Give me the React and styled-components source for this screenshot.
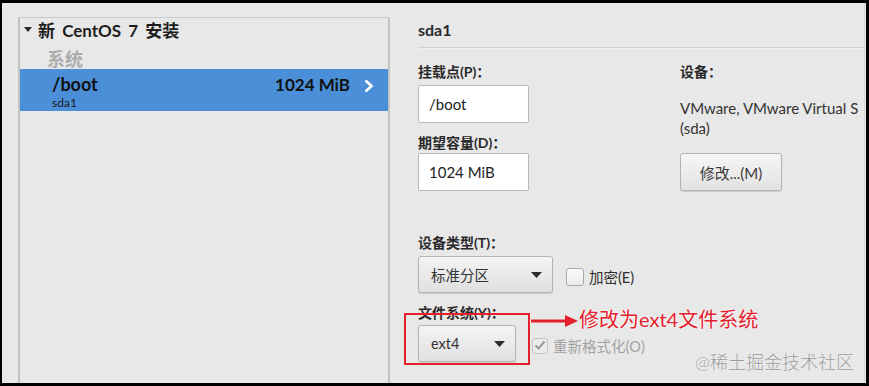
import React from "react";
import styled, { createGlobalStyle } from "styled-components";

const Global = createGlobalStyle`
  html, body { margin: 0; padding: 0; background: #000; }
  body { font-family: "Lato", "Noto Sans CJK SC", sans-serif; color: #2e3436; }
  * { box-sizing: border-box; }
`;

const Frame = styled.div`
  width: 869px;
  height: 386px;
  background: #000;
  padding: 3px 3px 3px 2px;
`;

const Screen = styled.div`
  width: 100%;
  height: 100%;
  background: #e8e8e8;
  display: flex;
  overflow: hidden;
`;

const Sidebar = styled.div`
  width: 388px;
  padding: 14px 0 0 16px;
  display: flex;
`;

const PartList = styled.div`
  flex: 1;
  border: 1px solid #c9c9c9;
  border-left: 2px solid #c2c2c2;
  border-right: 2px solid #c4c4c4;
  border-bottom: none;
  display: flex;
  flex-direction: column;
`;

const GroupHeader = styled.div`
  height: 22px;
  display: flex;
  align-items: center;
  padding-left: 4px;
  font-size: 17px;
  font-weight: 700;
  word-spacing: 3px;
  color: #1e1e1e;
  gap: 6px;
`;

const SectionLabel = styled.div`
  padding: 10px 0 0 27px;
  height: 29px;
  line-height: 19px;
  font-size: 18px;
  font-weight: 700;
  color: #acacac;
`;

const PartRow = styled.div`
  height: 42px;
  display: flex;
  align-items: flex-start;
  padding: 5px 14px 0 32px;
  background: ${(p) => (p.$selected ? "#4a8fd8" : "transparent")};
`;

const PartInfo = styled.div`
  flex: 1;
  display: flex;
  flex-direction: column;
`;

const PartName = styled.div`
  font-size: 18px;
  font-weight: 700;
  line-height: 20px;
  color: #111;
`;

const PartDev = styled.div`
  font-size: 12px;
  line-height: 14px;
  margin-top: 2px;
  color: #1a1a1a;
`;

const PartSize = styled.div`
  font-size: 17px;
  font-weight: 700;
  line-height: 20px;
  margin-top: 1px;
  color: #111;
`;

const ChevronWrap = styled.span`
  margin: 5px 0 0 13px;
  display: flex;
`;

const Detail = styled.div`
  position: relative;
  flex: 1;
  padding: 0 0 0 28px;
  border-right: 1px solid #d6d6d6;
  margin-right: 1px;
`;

const DetailTitle = styled.div`
  padding-top: 16px;
  line-height: 22px;
  font-size: 16px;
  font-weight: 700;
  color: #2a2a2a;
`;

const Divider = styled.div`
  margin-top: 6px;
  height: 1px;
  background: #d2d2d2;
  box-shadow: 0 1px 0 #f0f0f0;
`;

const FormGrid = styled.div`
  display: grid;
  grid-template-columns: 262px 1fr;
  padding-top: 16px;
`;

const Column = styled.div`
  display: flex;
  flex-direction: column;
  align-items: flex-start;
`;

const FieldLabel = styled.div`
  font-size: 14px;
  font-weight: 700;
  line-height: 16px;
  color: #2a2a2a;
  margin-top: ${(p) => p.$gap || 0}px;
`;

const TextField = styled.div`
  margin-top: ${(p) => p.$gap || 0}px;
  width: 111px;
  height: 38px;
  background: #fff;
  border: 1px solid #b9b9b9;
  border-radius: 2px;
  display: flex;
  align-items: center;
  padding-left: 10px;
  font-size: 15px;
  color: #222;
`;

const DeviceText = styled.div`
  margin-top: 18px;
  font-size: 15px;
  line-height: 20px;
  color: #333;
  white-space: nowrap;
`;

const PushButton = styled.div`
  margin-top: 15px;
  width: 102px;
  height: 38px;
  border: 1px solid #b3b3b3;
  border-radius: 3px;
  background: linear-gradient(#f6f6f6, #e2e2e2);
  box-shadow: 0 1px 1px rgba(0, 0, 0, 0.12);
  display: flex;
  align-items: center;
  justify-content: center;
  font-size: 15px;
  color: #3a3a3a;
`;

const ComboRow = styled.div`
  margin-top: ${(p) => p.$gap || 0}px;
  display: flex;
  align-items: center;
  gap: ${(p) => p.$spacing}px;
`;

const Combo = styled.div`
  width: ${(p) => p.$w}px;
  height: 37px;
  border: 1px solid #b3b3b3;
  border-radius: 3px;
  background: linear-gradient(#f4f4f4, #e0e0e0);
  box-shadow: 0 1px 1px rgba(0, 0, 0, 0.12);
  display: flex;
  align-items: center;
  justify-content: space-between;
  padding: 0 10px 0 12px;
  font-size: 14.5px;
  color: #333;
`;

const CheckLabel = styled.label`
  display: flex;
  align-items: center;
  gap: 5px;
  font-size: 14.5px;
  color: ${(p) => (p.$disabled ? "#a2a2a2" : "#2e2e2e")};
  margin-top: 4px;
`;

const CheckBox = styled.span`
  width: ${(p) => p.$size}px;
  height: ${(p) => p.$size}px;
  border: 1px solid ${(p) => (p.$disabled ? "#c4c4c4" : "#a9a9a9")};
  border-radius: 3px;
  background: ${(p) => (p.$disabled ? "#ececec" : "linear-gradient(#fbfbfb, #ececec)")};
  display: flex;
  align-items: center;
  justify-content: center;
`;

const HighlightBox = styled.div`
  position: absolute;
  left: 14px;
  top: 310px;
  width: 126px;
  height: 52px;
  border: 2px solid #e3202b;
  pointer-events: none;
`;

const Arrow = styled.svg`
  position: absolute;
  left: 141px;
  top: 311px;
`;

const Note = styled.div`
  position: absolute;
  left: 189px;
  top: 303px;
  font-size: 20px;
  line-height: 26px;
  color: #e3202b;
  text-shadow: 0 0 2px #fff, 0 0 2px #fff;
  white-space: nowrap;
`;

const Watermark = styled.div`
  position: absolute;
  right: 10px;
  bottom: 10px;
  font-size: 18px;
  line-height: 22px;
  font-weight: 300;
  color: #9a9a9a;
  text-shadow: 0 0 1px #fff;
  white-space: nowrap;
`;

const DownArrow = ({ w = 11, h = 6 }) => (
  <svg width={w} height={h} viewBox={`0 0 ${w} ${h}`}>
    <polygon points={`0,0 ${w},0 ${w / 2},${h}`} fill="#2b2b2b" />
  </svg>
);

export default function App() {
  return (
    <>
      <Global />
      <Frame>
        <Screen>
          <Sidebar>
            <PartList>
              <GroupHeader>
                <DownArrow w={8} h={5} />
                <span>新 CentOS 7 安装</span>
              </GroupHeader>
              <SectionLabel>系统</SectionLabel>
              <PartRow $selected>
                <PartInfo>
                  <PartName>/boot</PartName>
                  <PartDev>sda1</PartDev>
                </PartInfo>
                <PartSize>1024 MiB</PartSize>
                <ChevronWrap>
                  <svg width="11" height="14" viewBox="0 0 11 14">
                    <path d="M2.5 1.5 L8.5 7 L2.5 12.5" fill="none" stroke="#fff" strokeWidth="2.6" />
                  </svg>
                </ChevronWrap>
              </PartRow>
            </PartList>
          </Sidebar>
          <Detail>
            <DetailTitle>sda1</DetailTitle>
            <Divider />
            <FormGrid>
              <Column>
                <FieldLabel>挂载点(P)：</FieldLabel>
                <TextField $gap={5}>/boot</TextField>
                <FieldLabel $gap={12}>期望容量(D)：</FieldLabel>
                <TextField $gap={2}>1024 MiB</TextField>
                <FieldLabel $gap={44}>设备类型(T)：</FieldLabel>
                <ComboRow $gap={5} $spacing={13}>
                  <Combo $w={135}>
                    <span>标准分区</span>
                    <DownArrow />
                  </Combo>
                  <CheckLabel>
                    <CheckBox $size={18} />
                    加密(E)
                  </CheckLabel>
                </ComboRow>
                <FieldLabel $gap={12}>文件系统(Y)：</FieldLabel>
                <ComboRow $gap={4} $spacing={16}>
                  <Combo $w={98}>
                    <span>ext4</span>
                    <DownArrow />
                  </Combo>
                  <CheckLabel $disabled>
                    <CheckBox $size={16} $disabled>
                      <svg width="12" height="11" viewBox="0 0 12 11">
                        <path d="M1.5 5.5 L4.5 8.5 L10.5 1.5" fill="none" stroke="#9c9c9c" strokeWidth="2.2" />
                      </svg>
                    </CheckBox>
                    重新格式化(O)
                  </CheckLabel>
                </ComboRow>
              </Column>
              <Column>
                <FieldLabel>设备：</FieldLabel>
                <DeviceText>
                  VMware, VMware Virtual S
                  <br />
                  (sda)
                </DeviceText>
                <PushButton>修改...(M)</PushButton>
              </Column>
            </FormGrid>
            <HighlightBox />
            <Arrow width="48" height="14" viewBox="0 0 48 14">
              <line x1="0" y1="7" x2="36" y2="7" stroke="#e3202b" strokeWidth="3" />
              <polygon points="34,1 47,7 34,13" fill="#e3202b" />
            </Arrow>
            <Note>修改为ext4文件系统</Note>
            <Watermark>@稀土掘金技术社区</Watermark>
          </Detail>
        </Screen>
      </Frame>
    </>
  );
}
